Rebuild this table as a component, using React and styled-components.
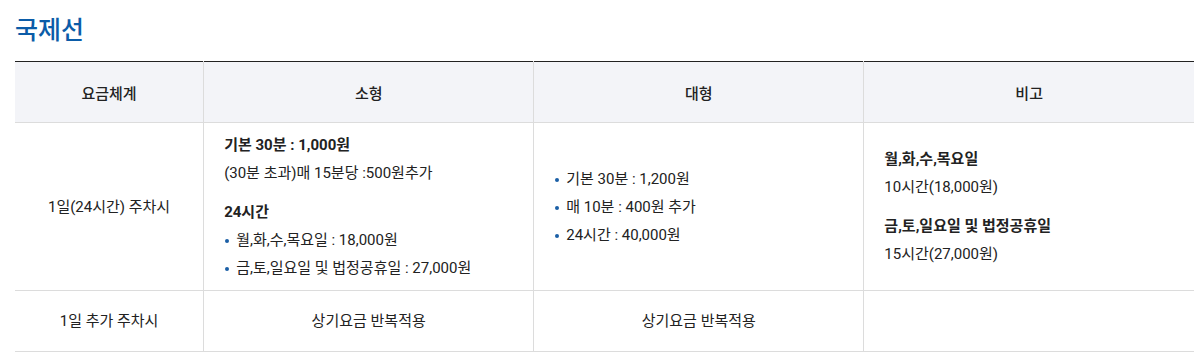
import React from "react";
import styled, { createGlobalStyle } from "styled-components";

const Global = createGlobalStyle`
  html, body { margin: 0; padding: 0; background: #fff; }
  body { font-family: Roboto, "Noto Sans CJK KR", sans-serif; color: #222; }
`;

const Page = styled.div`
  padding: 10px 8px 12px 15px;
`;

const Title = styled.h2`
  margin: 0 0 15px;
  font-family: "Noto Sans CJK KR", sans-serif;
  font-size: 25px;
  line-height: 36px;
  font-weight: 500;
  color: #0b5ca8;
`;

const Table = styled.table`
  width: 100%;
  border-collapse: collapse;
  table-layout: fixed;
  border-top: 1px solid #222;
  font-size: 15px;
  color: #222;
`;

const Th = styled.th`
  height: 60px;
  padding: 0;
  background: #f3f4f8;
  font-weight: 500;
  text-align: center;
  border-bottom: 1px solid #dcdcdc;
  border-left: 1px solid #dcdcdc;
  &:first-child { border-left: none; }
`;

const Td = styled.td`
  padding: ${(p) => (p.$left ? "6px 20px" : "0 20px")};
  text-align: ${(p) => (p.$left ? "left" : "center")};
  vertical-align: middle;
  line-height: 28px;
  height: ${(p) => p.$h || "auto"};
  border-bottom: 1px solid #dcdcdc;
  border-left: 1px solid #dcdcdc;
  &:first-child { border-left: none; }
`;

const Para = styled.p`
  margin: 0;
  & + & { margin-top: 11px; }
`;

const Strong = styled.strong`
  display: block;
  font-weight: 700;
`;

const Line = styled.span`
  display: block;
`;

const List = styled.ul`
  margin: 0;
  padding: 0;
  list-style: none;
`;

const Item = styled.li`
  position: relative;
  padding-left: 12px;
  &::before {
    content: "";
    position: absolute;
    left: 1px;
    top: 13px;
    width: 4px;
    height: 4px;
    border-radius: 50%;
    background: #1b5fa6;
  }
`;

export default function App() {
  return (
    <>
      <Global />
      <Page>
        <Title>국제선</Title>
        <Table>
          <colgroup>
            <col style={{ width: "16%" }} />
            <col style={{ width: "28%" }} />
            <col style={{ width: "28%" }} />
            <col style={{ width: "28%" }} />
          </colgroup>
          <thead>
            <tr>
              <Th>요금체계</Th>
              <Th>소형</Th>
              <Th>대형</Th>
              <Th>비고</Th>
            </tr>
          </thead>
          <tbody>
            <tr>
              <Td $h="167px">1일(24시간) 주차시</Td>
              <Td $left>
                <Para>
                  <Strong>기본 30분 : 1,000원</Strong>
                  <Line>(30분 초과)매 15분당 :500원추가</Line>
                </Para>
                <Para>
                  <Strong>24시간</Strong>
                  <List>
                    <Item>월,화,수,목요일 : 18,000원</Item>
                    <Item>금,토,일요일 및 법정공휴일 : 27,000원</Item>
                  </List>
                </Para>
              </Td>
              <Td $left>
                <List>
                  <Item>기본 30분 : 1,200원</Item>
                  <Item>매 10분 : 400원 추가</Item>
                  <Item>24시간 : 40,000원</Item>
                </List>
              </Td>
              <Td $left>
                <Para>
                  <Strong>월,화,수,목요일</Strong>
                  <Line>10시간(18,000원)</Line>
                </Para>
                <Para>
                  <Strong>금,토,일요일 및 법정공휴일</Strong>
                  <Line>15시간(27,000원)</Line>
                </Para>
              </Td>
            </tr>
            <tr>
              <Td $h="60px">1일 추가 주차시</Td>
              <Td>상기요금 반복적용</Td>
              <Td>상기요금 반복적용</Td>
              <Td></Td>
            </tr>
          </tbody>
        </Table>
      </Page>
    </>
  );
}
